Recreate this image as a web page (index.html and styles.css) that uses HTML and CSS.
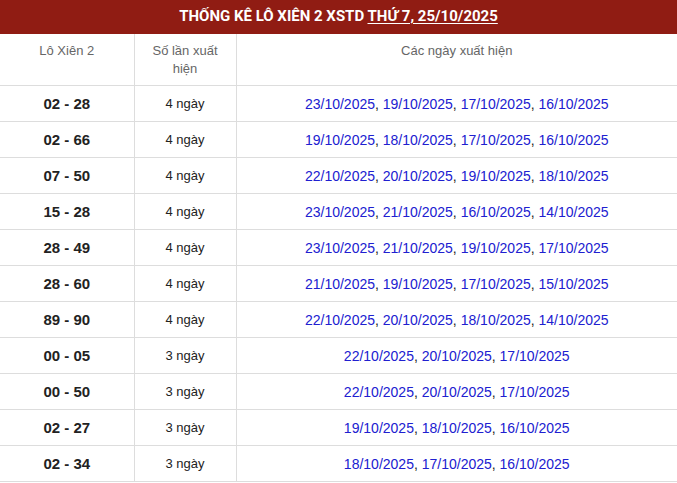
FILE: index.html
```html
<!DOCTYPE html>
<html lang="vi">
<head>
<meta charset="utf-8">
<link rel="stylesheet" href="styles.css">
</head>
<body>
<div class="box">
  <h2 class="title">THỐNG KÊ LÔ XIÊN 2 XSTD <a class="date-link" href="#">THỨ 7, 25/10/2025</a></h2>
  <table class="stats">
    <colgroup><col class="c1"><col class="c2"><col class="c3"></colgroup>
    <thead>
      <tr><th>Lô Xiên 2</th><th>Số lần xuất hiện</th><th>Các ngày xuất hiện</th></tr>
    </thead>
    <tbody>
      <tr><td class="pair">02 - 28</td><td class="cnt">4 ngày</td><td class="dates"><a>23/10/2025</a>, <a>19/10/2025</a>, <a>17/10/2025</a>, <a>16/10/2025</a></td></tr>
      <tr><td class="pair">02 - 66</td><td class="cnt">4 ngày</td><td class="dates"><a>19/10/2025</a>, <a>18/10/2025</a>, <a>17/10/2025</a>, <a>16/10/2025</a></td></tr>
      <tr><td class="pair">07 - 50</td><td class="cnt">4 ngày</td><td class="dates"><a>22/10/2025</a>, <a>20/10/2025</a>, <a>19/10/2025</a>, <a>18/10/2025</a></td></tr>
      <tr><td class="pair">15 - 28</td><td class="cnt">4 ngày</td><td class="dates"><a>23/10/2025</a>, <a>21/10/2025</a>, <a>16/10/2025</a>, <a>14/10/2025</a></td></tr>
      <tr><td class="pair">28 - 49</td><td class="cnt">4 ngày</td><td class="dates"><a>23/10/2025</a>, <a>21/10/2025</a>, <a>19/10/2025</a>, <a>17/10/2025</a></td></tr>
      <tr><td class="pair">28 - 60</td><td class="cnt">4 ngày</td><td class="dates"><a>21/10/2025</a>, <a>19/10/2025</a>, <a>17/10/2025</a>, <a>15/10/2025</a></td></tr>
      <tr><td class="pair">89 - 90</td><td class="cnt">4 ngày</td><td class="dates"><a>22/10/2025</a>, <a>20/10/2025</a>, <a>18/10/2025</a>, <a>14/10/2025</a></td></tr>
      <tr><td class="pair">00 - 05</td><td class="cnt">3 ngày</td><td class="dates"><a>22/10/2025</a>, <a>20/10/2025</a>, <a>17/10/2025</a></td></tr>
      <tr><td class="pair">00 - 50</td><td class="cnt">3 ngày</td><td class="dates"><a>22/10/2025</a>, <a>20/10/2025</a>, <a>17/10/2025</a></td></tr>
      <tr><td class="pair">02 - 27</td><td class="cnt">3 ngày</td><td class="dates"><a>19/10/2025</a>, <a>18/10/2025</a>, <a>16/10/2025</a></td></tr>
      <tr><td class="pair">02 - 34</td><td class="cnt">3 ngày</td><td class="dates"><a>18/10/2025</a>, <a>17/10/2025</a>, <a>16/10/2025</a></td></tr>
    </tbody>
  </table>
</div>
</body>
</html>
```
FILE: styles.css
```css
html, body {
  margin: 0;
  padding: 0;
  background: #fff;
}
body {
  font-family: "Liberation Sans", Arial, sans-serif;
  color: #222;
}
.box {
  width: 677px;
}
.title {
  margin: 0;
  height: 34px;
  line-height: 32px;
  background: #901c13;
  color: #fff;
  font-family: Roboto, "Liberation Sans", sans-serif;
  font-weight: 700;
  font-size: 15px;
  text-align: center;
}
.date-link {
  color: #fff;
  text-decoration: underline;
  text-underline-offset: 2px;
}
.stats {
  width: 677px;
  border-collapse: collapse;
  table-layout: fixed;
}
.c1 { width: 134px; }
.c2 { width: 102px; }
.stats th {
  font-weight: 400;
  font-size: 13px;
  line-height: 18px;
  color: #666;
  vertical-align: top;
  padding: 8px 10px 7px;
  height: 35px;
  box-sizing: content-box;
  border-left: 1px solid #ddd;
  border-bottom: 1px solid #ddd;
}
.stats th:first-child, .stats td:first-child {
  border-left: none;
}
.stats td {
  height: 35px;
  padding: 0 6px;
  text-align: center;
  vertical-align: middle;
  border-left: 1px solid #ddd;
  border-bottom: 1px solid #ddd;
}
.pair {
  font-weight: 700;
  font-size: 15px;
  color: #222;
}
.cnt {
  font-size: 13px;
  color: #222;
}
.dates {
  font-size: 14px;
  color: #222;
}
.dates a {
  color: #2020d0;
  text-decoration: none;
}
```
